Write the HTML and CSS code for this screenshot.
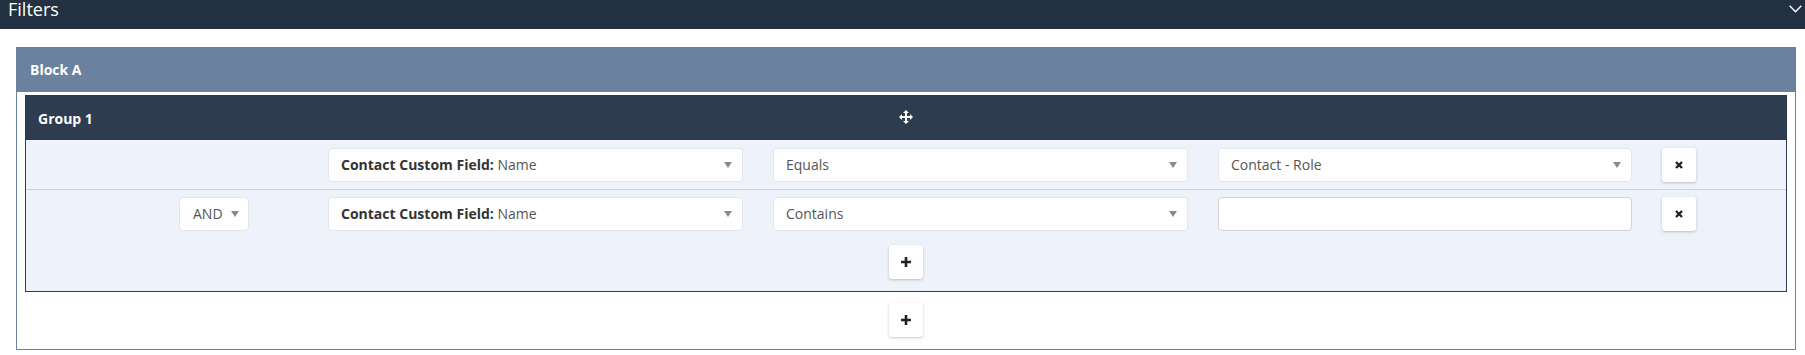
FILE: index.html
```html
<!DOCTYPE html>
<html lang="en">
<head>
    <meta charset="UTF-8">
    <meta name="viewport" content="width=device-width, initial-scale=1.0">
    <title>Filters</title>
    <link rel="stylesheet" href="styles.css">
</head>
<body>
    <div class="topbar">
        <span class="topbar-title">Filters</span>
        <svg class="chevron" width="13" height="8" viewBox="0 0 13 8">
            <path d="M0.7 0.7 L6.5 6.8 L12.3 0.7" fill="none" stroke="#fff" stroke-width="1.4"/>
        </svg>
    </div>

    <div class="content">
        <div class="block">
            <div class="block-header">Block A</div>
            <div class="block-body">
                <div class="group">
                    <div class="group-header">
                        <span class="group-title">Group 1</span>
                        <svg class="move-icon" width="14" height="14" viewBox="0 0 14 14">
                            <path d="M7 0 L10 3 L8 3 L8 6 L11 6 L11 4 L14 7 L11 10 L11 8 L8 8 L8 11 L10 11 L7 14 L4 11 L6 11 L6 8 L3 8 L3 10 L0 7 L3 4 L3 6 L6 6 L6 3 L4 3 Z" fill="#fff"/>
                        </svg>
                    </div>

                    <div class="rule-row first">
                        <div class="col-join"></div>
                        <div class="select">
                            <span><b>Contact Custom Field:</b> Name</span>
                            <i class="caret"></i>
                        </div>
                        <div class="select">
                            <span>Equals</span>
                            <i class="caret"></i>
                        </div>
                        <div class="select">
                            <span>Contact - Role</span>
                            <i class="caret"></i>
                        </div>
                        <button class="icon-btn">
                            <svg width="8" height="8" viewBox="0 0 8 8"><path d="M1 1 L7 7 M7 1 L1 7" stroke="#222" stroke-width="2.4"/></svg>
                        </button>
                    </div>

                    <div class="rule-row">
                        <div class="col-join">
                            <div class="select join-select">
                                <span>AND</span>
                                <i class="caret"></i>
                            </div>
                        </div>
                        <div class="select">
                            <span><b>Contact Custom Field:</b> Name</span>
                            <i class="caret"></i>
                        </div>
                        <div class="select">
                            <span>Contains</span>
                            <i class="caret"></i>
                        </div>
                        <div class="text-input"></div>
                        <button class="icon-btn">
                            <svg width="8" height="8" viewBox="0 0 8 8"><path d="M1 1 L7 7 M7 1 L1 7" stroke="#222" stroke-width="2.4"/></svg>
                        </button>
                    </div>

                    <div class="add-row">
                        <button class="icon-btn">
                            <svg width="10" height="10" viewBox="0 0 10 10"><path d="M5 0 V10 M0 5 H10" stroke="#222" stroke-width="2.6"/></svg>
                        </button>
                    </div>
                </div>

                <div class="add-group">
                    <button class="icon-btn">
                        <svg width="10" height="10" viewBox="0 0 10 10"><path d="M5 0 V10 M0 5 H10" stroke="#222" stroke-width="2.6"/></svg>
                    </button>
                </div>
            </div>
        </div>
    </div>
</body>
</html>
```

FILE: styles.css
```css
* {
    margin: 0;
    padding: 0;
    box-sizing: border-box;
}

body {
    font-family: 'Open Sans', 'Noto Sans', sans-serif;
    font-size: 14px;
    color: #333;
    background: #fff;
}

.topbar {
    height: 29px;
    background: #233142;
    color: #fff;
    display: flex;
    justify-content: space-between;
    align-items: flex-start;
    padding: 0 3px 0 8px;
}

.topbar-title {
    font-size: 18px;
    line-height: 18px;
}

.chevron {
    margin-top: 5px;
}

.content {
    padding: 18px 9px 6px 16px;
}

.block {
    border: 1px solid #6a82a0;
}

.block-header {
    height: 44px;
    background: #6a82a0;
    color: #fff;
    font-weight: bold;
    display: flex;
    align-items: center;
    padding: 0 0 1px 13px;
}

.block-body {
    padding: 3px 8px 12px;
}

.group {
    border: 1px solid #2b3a4e;
    background: #eef2fa;
}

.group-header {
    height: 44px;
    background: #2d3d4f;
    color: #fff;
    font-weight: bold;
    display: flex;
    align-items: center;
    padding-left: 12px;
    position: relative;
}

.move-icon {
    position: absolute;
    left: 50%;
    top: 14px;
    margin-left: -7px;
}

.rule-row {
    display: grid;
    grid-template-columns: 272px 415px 415px 414px 34px;
    column-gap: 30px;
    align-items: center;
    padding: 7px 0 0;
}

.rule-row.first {
    padding: 8px 0 7px;
    border-bottom: 1px solid #cfd3d9;
}

.select {
    height: 34px;
    background: #fff;
    border: 1px solid #e3e6eb;
    border-radius: 4px;
    display: flex;
    align-items: center;
    justify-content: space-between;
    padding: 0 10px 1px 12px;
    color: #555;
    white-space: nowrap;
}

.select b {
    color: #333;
}

.caret {
    width: 0;
    height: 0;
    border-top: 6px solid #8a8a8a;
    border-left: 4px solid transparent;
    border-right: 4px solid transparent;
}

.join-select {
    width: 70px;
    margin-left: 153px;
    padding: 0 9px 1px 13px;
}

.text-input {
    height: 34px;
    background: #fff;
    border: 1px solid #cfd2d7;
    border-radius: 4px;
}

.icon-btn {
    width: 34px;
    height: 34px;
    background: #fff;
    border: none;
    border-radius: 3px;
    box-shadow: 0 1px 3px rgba(0, 0, 0, 0.22);
    display: flex;
    align-items: center;
    justify-content: center;
    cursor: pointer;
}

.add-row {
    display: flex;
    justify-content: center;
    padding: 14px 0 12px;
}

.add-group {
    display: flex;
    justify-content: center;
    padding-top: 11px;
}
```
